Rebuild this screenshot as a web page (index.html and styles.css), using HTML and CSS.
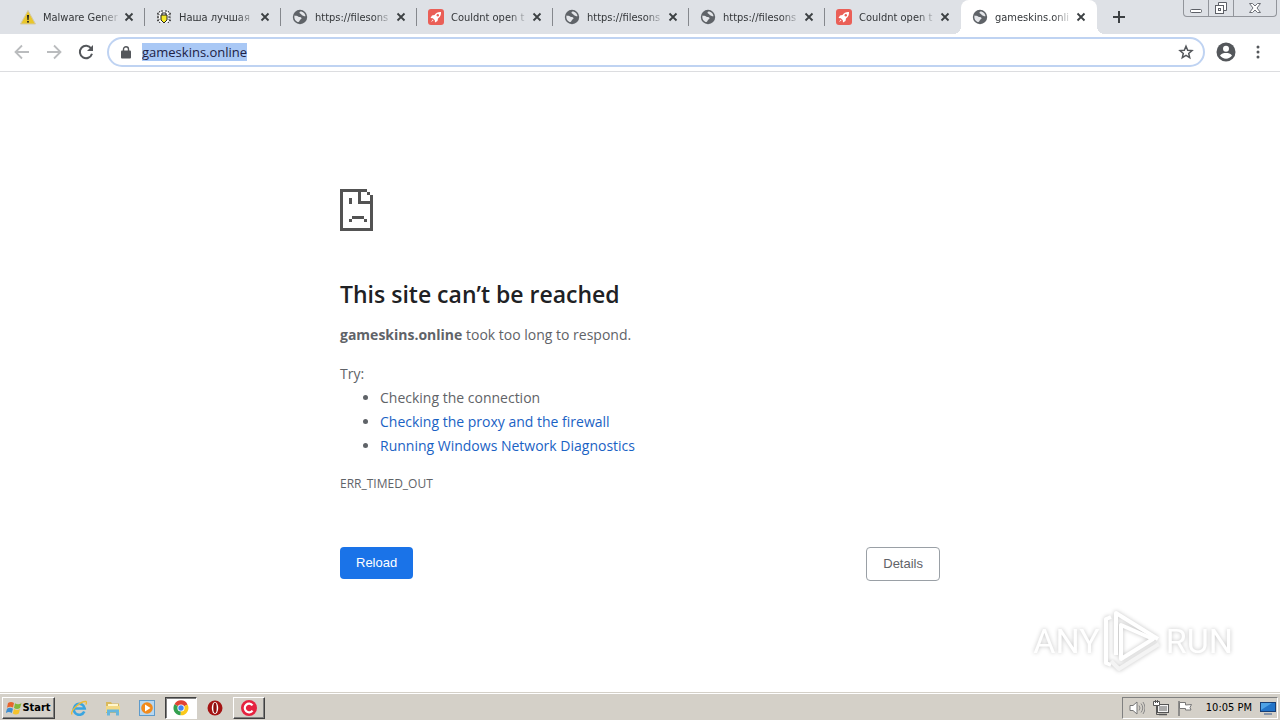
FILE: index.html
```html
<!DOCTYPE html>
<html lang="en">

<head>
    <meta charset="UTF-8">
    <meta name="viewport" content="width=device-width, initial-scale=1.0">
    <title>gameskins.online</title>
    <link rel="stylesheet" href="styles.css">
</head>

<body>
    <!-- shared icons -->
    <svg class="defs" width="0" height="0">
        <symbol id="globe" viewBox="0 0 16 16">
            <circle cx="8" cy="8" r="7.200" fill="#5f6368"/>
            <path d="M2.500 6.500c1.500.3 2.600 0 3.600 1 .9.900 2.700.2 3.400 1.500.4 1.200-1.500 1.300-1.800 2.600-.2 1-1.200 1.800-2.200 1.400C3.500 12 2.300 10 2.300 8z" fill="#e4e6ea"/>
            <path d="M8.500 2.500c-1.500.6-1.200 1.900 0 2.200 1.200.3 1 1.600 2.200 1.800.8.200 1.500 1 2.800.7C13.300 4.700 11 2.500 8.500 2.500z" fill="#e4e6ea"/>
        </symbol>
        <symbol id="rocket" viewBox="0 0 16 16">
            <rect width="16" height="16" rx="3" fill="#ea5f57"/>
            <path d="M13 3c-3-.3-5 .8-6.500 3L4 6.500 2.500 9l2.300.2 2 2L7 13.500l2.500-1.500.5-2.500C12.200 8 13.200 6 13 3z" fill="#fff"/>
            <circle cx="9.800" cy="6.300" r="1.200" fill="#ea5f57"/>
            <path d="M4.800 10.500L2.800 13.200l2.700-1.900z" fill="#fff"/>
        </symbol>
        <symbol id="close" viewBox="0 0 10 10">
            <path d="M1.500 1.500l7 7m0-7l-7 7" stroke="#3c4043" stroke-width="1.800"/>
        </symbol>
    </svg>

    <header class="tabstrip">
        <div class="tab">
            <svg class="favicon" viewBox="0 0 16 16"><path d="M8 1.500L15.500 15H.5z" fill="#e9c62a" stroke="#d3c9a6"/><path d="M7 6h2L8.600 11H7.400z" fill="#222"/><circle cx="8" cy="12.800" r="1" fill="#222"/></svg>
            <span class="title">Malware Gener</span>
            <button class="close" aria-label="Close tab"><svg><use href="#close"/></svg></button>
        </div>
        <div class="tab">
            <svg class="favicon" viewBox="0 0 16 16"><circle cx="8" cy="8" r="6" fill="#fff"/><path d="M4 2L2 5v6l2 3M12 2l2 3v6l-2 3M1 8h3m8 0h3M1 4l3 2m11-2l-3 2M1 12l3-2m11 2l-3-2M6 1v3m4-3v3" fill="none" stroke="#333" stroke-dasharray="2 1"/><path d="M5 6h6v5l-3 3-3-3z" fill="#f5e928" stroke="#222"/><path d="M6 6V4h4v2" fill="none" stroke="#222"/></svg>
            <span class="title">Наша лучшая</span>
            <button class="close" aria-label="Close tab"><svg><use href="#close"/></svg></button>
        </div>
        <div class="tab">
            <svg class="favicon"><use href="#globe"/></svg>
            <span class="title">https://filesons</span>
            <button class="close" aria-label="Close tab"><svg><use href="#close"/></svg></button>
        </div>
        <div class="tab">
            <svg class="favicon"><use href="#rocket"/></svg>
            <span class="title">Couldnt open t</span>
            <button class="close" aria-label="Close tab"><svg><use href="#close"/></svg></button>
        </div>
        <div class="tab">
            <svg class="favicon"><use href="#globe"/></svg>
            <span class="title">https://filesons</span>
            <button class="close" aria-label="Close tab"><svg><use href="#close"/></svg></button>
        </div>
        <div class="tab">
            <svg class="favicon"><use href="#globe"/></svg>
            <span class="title">https://filesons</span>
            <button class="close" aria-label="Close tab"><svg><use href="#close"/></svg></button>
        </div>
        <div class="tab last">
            <svg class="favicon"><use href="#rocket"/></svg>
            <span class="title">Couldnt open t</span>
            <button class="close" aria-label="Close tab"><svg><use href="#close"/></svg></button>
        </div>
        <div class="tab active">
            <svg class="favicon"><use href="#globe"/></svg>
            <span class="title">gameskins.onli</span>
            <button class="close" aria-label="Close tab"><svg><use href="#close"/></svg></button>
        </div>
        <button class="new-tab" aria-label="New tab"><svg viewBox="0 0 12 12"><path d="M6 0v12M0 6h12" stroke="#3c4043" stroke-width="2"/></svg></button>
        <div class="window-buttons">
            <button aria-label="Minimize"><svg viewBox="0 0 14 14"><rect x="1.500" y="8.500" width="11" height="3" rx="1" fill="#fff" stroke="#5d6067"/></svg></button>
            <button aria-label="Restore"><svg viewBox="0 0 14 14"><path d="M4.500 4.500v-3h8v8h-3" fill="#fff" stroke="#5d6067"/><rect x="1.500" y="4.500" width="8" height="8" fill="#fff" stroke="#5d6067"/><rect x="4.500" y="7.500" width="2" height="2" fill="none" stroke="#5d6067"/></svg></button>
            <button class="wide" aria-label="Close"><svg viewBox="0 0 14 14"><path d="M1.500 2.500h3L7 5l2.500-2.500h3L9 7l3.500 4.500h-3L7 9l-2.500 2.500h-3L5 7z" fill="#fff" stroke="#6d7077"/></svg></button>
        </div>
    </header>

    <nav class="toolbar">
        <button aria-label="Back"><svg viewBox="0 0 16 16"><path d="M15 8H2m6-6.500L1.500 8 8 14.500" fill="none" stroke="#babcbe" stroke-width="1.800"/></svg></button>
        <button aria-label="Forward"><svg viewBox="0 0 16 16"><path d="M1 8h13M8 1.500L14.500 8 8 14.500" fill="none" stroke="#babcbe" stroke-width="1.800"/></svg></button>
        <button aria-label="Reload page"><svg viewBox="0 0 16 16"><path d="M13.200 4.500A6.200 6.200 0 1 0 14 9.800" fill="none" stroke="#54575b" stroke-width="2"/><path d="M15 1v6H9z" fill="#54575b"/></svg></button>
        <div class="omnibox">
            <svg class="lock" viewBox="0 0 10 13"><rect y="4.500" width="10" height="8" rx="1" fill="#54575b"/><path d="M2.500 5V3.200a2.500 2.500 0 0 1 5 0V5" fill="none" stroke="#54575b" stroke-width="1.400"/></svg>
            <input type="text" id="address" aria-label="Address" value="gameskins.online" spellcheck="false">
            <button aria-label="Bookmark"><svg viewBox="0 0 16 16"><path d="M8 2.200l1.700 4 4.300.4-3.300 2.800 1 4.200L8 11.400l-3.700 2.200 1-4.200L2 6.600l4.300-.4z" fill="none" stroke="#54575b" stroke-width="1.500"/></svg></button>
        </div>
        <button class="profile" aria-label="Profile"><svg viewBox="0 0 20 20"><circle cx="10" cy="10" r="9.500" fill="#54575b"/><circle cx="10" cy="6.800" r="3" fill="#fff"/><path d="M4 13.500c1.500-2 3.500-2.500 6-2.500s4.500.5 6 2.500c-1.300 2-3.500 3.200-6 3.200S5.300 15.500 4 13.500z" fill="#fff"/></svg></button>
        <button aria-label="Menu"><svg viewBox="0 0 16 16"><g fill="#54575b"><circle cx="8" cy="3" r="1.500"/><circle cx="8" cy="8" r="1.500"/><circle cx="8" cy="13" r="1.500"/></g></svg></button>
    </nav>

    <main>
        <div class="error-page">
            <svg class="sad-page" viewBox="0 0 11 14" shape-rendering="crispEdges">
                <path d="M0 0h9v1H1v12h9V5h1v9H0zM6 1h1v3h3v1H6zM9 1h1v1H9zM10 2h1v3h-1zM3 3h1v2H3zM4 9h4v1H4zM3 10h1v1H3zM8 10h1v1H8z" fill="#535353"/>
            </svg>
            <h1>This site can’t be reached</h1>
            <p><strong>gameskins.online</strong> took too long to respond.</p>
            <p class="try">Try:</p>
            <ul>
                <li>Checking the connection</li>
                <li><a href="#">Checking the proxy and the firewall</a></li>
                <li><a href="#">Running Windows Network Diagnostics</a></li>
            </ul>
            <div class="error-code">ERR_TIMED_OUT</div>
            <div class="buttons">
                <button class="reload">Reload</button>
                <button class="details">Details</button>
            </div>
        </div>
        <div class="watermark">
            <span>ANY</span>
            <svg viewBox="0 0 60 64">
                <g fill="none" stroke="#fff" stroke-width="4" stroke-linejoin="round">
                    <path d="M8 8L3 10v44l5 2"/>
                    <path d="M13 46V4l42 26"/>
                    <path d="M18 16v34l32-20z"/>
                    <path d="M8 52l8 8 40-25" stroke="#f4f4f4"/>
                </g>
            </svg>
            <span>RUN</span>
        </div>
    </main>

    <footer class="taskbar">
        <button class="start">
            <svg viewBox="0 0 16 16"><path d="M2 3c2-1.500 4-1.500 6 0L7 7.500C5 6.500 3 6.500 1 7.800z" fill="#e8642c"/><path d="M9 3.300c2 1.200 4 1.200 6.500 0L14 8c-2 1.300-4 1.200-6 0z" fill="#83b83b"/><path d="M1 8.800c2-1.300 4-1.300 6 0L5.800 13c-2-1.300-4-1.200-6 0z" fill="#3e8ed0"/><path d="M8 9c2 1.200 4 1.200 6 0l-1.200 4.500c-2 1.300-4 1.300-6 0z" fill="#f5c32c"/></svg>
            Start
        </button>
        <button class="app" aria-label="Internet Explorer"><svg viewBox="0 0 16 16"><path d="M13.300 11.500A5.500 5.500 0 1 1 13.700 8.500H4" fill="none" stroke="#3aa5e0" stroke-width="2.600"/><path d="M1 14.500C-1 11 9 1 15 1.500c1 .5.500 2-.3 3" fill="none" stroke="#edba35" stroke-width="1.300"/></svg></button>
        <button class="app" aria-label="Explorer"><svg viewBox="0 0 16 16"><path d="M1 2h5l1 1.500h7V13H1z" fill="#d9b95c"/><path d="M3 4h10v5H3z" fill="#fff6cd"/><path d="M1 6h14v6H1z" fill="#f3d985"/><path d="M2 15.500v-6h12v6h-3v-3H5v3z" fill="#66b6dd"/></svg></button>
        <button class="app" aria-label="Media Player"><svg viewBox="0 0 16 16"><rect x=".5" y=".5" width="15" height="15" fill="#b7d7f0" stroke="#5e9bcb"/><circle cx="8" cy="8" r="5.800" fill="#f18a1c"/><path d="M6 4.500L11.500 8 6 11.500z" fill="#fff"/></svg></button>
        <button class="app pressed" aria-label="Chrome"><svg viewBox="0 0 16 16"><path d="M8 8L1.500 4.200A7.300 7.300 0 0 1 14.500 4.500z" fill="#e04434"/><path d="M8 8l6.500-3.500A7.300 7.300 0 0 1 7.500 15.300z" fill="#fbc91b"/><path d="M8 8l-.5 7.300A7.300 7.300 0 0 1 1.500 4.200z" fill="#34a04f"/><circle cx="8" cy="8" r="3.600" fill="#fff"/><circle cx="8" cy="8" r="2.700" fill="#4285f4"/></svg></button>
        <button class="app" aria-label="Opera"><svg viewBox="0 0 16 16"><circle cx="8" cy="8" r="7.500" fill="#a51414"/><ellipse cx="8" cy="8" rx="3.200" ry="6" fill="#fff"/><ellipse cx="8" cy="8" rx="1.700" ry="5.200" fill="#8d0e0e"/></svg></button>
        <button class="app raised" aria-label="CCleaner"><svg viewBox="0 0 16 16"><circle cx="8" cy="8" r="8" fill="#e5223f"/><path d="M11.500 5.400a4.300 4.300 0 1 0 0 5.200" fill="none" stroke="#fff" stroke-width="2.200"/></svg></button>
        <div class="tray">
            <svg viewBox="0 0 16 16"><path d="M1 5.500h3L8 2v12l-4-3.500H1z" fill="#fff" stroke="#777"/><path d="M10 5.500q2 2.500 0 5M12 3.500q3.500 4.500 0 9M14 2q4 6 0 12" fill="none" stroke="#888"/></svg>
            <svg viewBox="0 0 16 16"><rect x="4.500" y="4.500" width="11" height="8" fill="#f4f4f4" stroke="#555"/><path d="M6 6h8v5H6z" fill="#aaa"/><path d="M6 14.500h8" stroke="#555" stroke-width="1.500"/><path d="M.5 1.500h6v4h-6z" fill="#fff" stroke="#555"/><path d="M2.500 0v3m2-3v3M3.500 6v8.500H6" fill="none" stroke="#555"/></svg>
            <svg viewBox="0 0 16 16"><path d="M2 1v15" stroke="#777" stroke-width="1.500"/><path d="M2.500 2.500h6V5l6-.5-1.500 3 1 2.500H8.500V8.500h-6z" fill="#fff" stroke="#777"/></svg>
            <time>10:05 PM</time>
            <svg viewBox="0 0 16 16"><rect x=".5" y="2.500" width="15" height="9" fill="#2374c8" stroke="#173e75"/><path d="M1 10L12 3H1z" fill="#4da1e5"/><path d="M4 14h8" stroke="#8494aa" stroke-width="2"/></svg>
        </div>
    </footer>

    <script>
        // the address is selected when the page opens
        document.querySelector("#address").select();
    </script>
</body>

</html>
```
FILE: styles.css
```css
* {
    box-sizing: border-box;
}

body {
    margin: 0;
    min-height: 100vh;
    display: flex;
    flex-direction: column;
    background-color: white;
    font-family: "Open Sans", sans-serif;
    color: #5f6368;
}

button {
    display: flex;
    align-items: center;
    justify-content: center;
    padding: 0;
    border: none;
    background: transparent;
    font-family: inherit;
}

svg {
    display: block;
    flex: none;
}

.defs {
    position: absolute;
}

/* tabs */
.tabstrip {
    display: flex;
    height: 34px;
    padding-left: 9px;
    background-color: #dee1e6;
}

.tab {
    flex: 0 1 136px;
    min-width: 0;
    display: flex;
    align-items: center;
    padding: 0 9px 0 11px;
    background: linear-gradient(#85888d, #85888d) right center / 1px 18px no-repeat;
}

.tab.last {
    background: none;
}

.tab.active {
    position: relative;
    background: white;
    border-radius: 8px 8px 0 0;
}

/* flared feet of the active tab */
.tab.active::before,
.tab.active::after {
    content: "";
    position: absolute;
    bottom: 0;
    width: 8px;
    height: 8px;
}

.tab.active::before {
    right: 100%;
    background: radial-gradient(circle at 0 0, transparent 8px, white 8px);
}

.tab.active::after {
    left: 100%;
    background: radial-gradient(circle at 100% 0, transparent 8px, white 8px);
}

.favicon {
    width: 16px;
    height: 16px;
}

.title {
    flex: 1;
    min-width: 0;
    margin: 0 0 0 7px;
    overflow: hidden;
    white-space: nowrap;
    font-family: "DejaVu Sans Condensed", "DejaVu Sans", sans-serif;
    font-size: 11px;
    color: #333639;
    mask-image: linear-gradient(to right, black 58px, transparent 78px);
}

.close {
    width: 14px;
    height: 16px;
}

.close svg {
    width: 10px;
    height: 10px;
}

.new-tab {
    width: 44px;
}

.new-tab svg {
    width: 12px;
    height: 12px;
}

.window-buttons {
    display: flex;
    height: 17px;
    margin-left: auto;
    margin-right: 3px;
    border: 1px solid #92959b;
    border-top: none;
    border-radius: 0 0 4px 4px;
}

.window-buttons button {
    width: 25px;
    border-right: 1px solid #92959b;
}

.window-buttons .wide {
    width: 42px;
    border-right: none;
}

.window-buttons svg {
    width: 14px;
    height: 14px;
}

/* toolbar */
.toolbar {
    display: flex;
    align-items: center;
    height: 38px;
    padding: 0 6px 1px;
    border-bottom: 1px solid #dcdde0;
}

.toolbar button {
    width: 32px;
    height: 32px;
}

.toolbar svg {
    width: 16px;
    height: 16px;
}

.omnibox {
    flex: 1;
    display: flex;
    align-items: center;
    height: 30px;
    margin: 0 5px;
    padding: 0 1px 0 12px;
    border: 2px solid #bfd3f2;
    border-radius: 15px;
}

.omnibox .lock {
    width: 10px;
    height: 13px;
}

.omnibox input {
    flex: 1;
    min-width: 0;
    padding: 0;
    margin-left: 11px;
    border: none;
    outline: none;
    font-family: "Open Sans", sans-serif;
    font-size: 13px;
    line-height: 18px;
    height: 18px;
    color: #202124;
}

.omnibox input::selection {
    background-color: #a9c8f5;
    color: #202145;
}

.toolbar .profile svg {
    width: 20px;
    height: 20px;
}

/* error page */
main {
    flex: 1;
    position: relative;
}

.error-page {
    max-width: 600px;
    margin: 0 auto;
    padding-top: 117px;
    font-size: 14px;
    line-height: 24px;
}

.sad-page {
    width: 33px;
    height: 42px;
}

h1 {
    margin: 48px 0 14px;
    font-size: 23px;
    font-weight: 600;
    line-height: 30px;
    color: #202124;
}

p {
    margin: 0;
}

.try {
    margin-top: 15px;
}

ul {
    margin: 0;
    padding-left: 40px;
}

a {
    color: #1a62c4;
    text-decoration: none;
}

.error-code {
    margin-top: 14px;
    font-size: 12px;
}

.buttons {
    display: flex;
    justify-content: space-between;
    align-items: flex-start;
    margin-top: 51px;
}

.buttons button {
    padding: 0 16px;
    border-radius: 4px;
    font-family: "Liberation Sans", sans-serif;
    font-size: 13px;
    line-height: 32px;
}

.reload {
    background-color: #1a73e8;
    color: white;
}

.details {
    border: 1px solid #9aa0a6;
    color: #5f6368;
}

.watermark {
    position: absolute;
    right: 47px;
    bottom: 19px;
    display: flex;
    align-items: center;
    gap: 3px;
    color: white;
    font-family: Roboto, sans-serif;
    font-size: 34px;
    line-height: 64px;
    filter: drop-shadow(0 0 2px #c4c4c4);
}

.watermark svg {
    width: 60px;
    height: 64px;
}

/* taskbar */
.taskbar {
    display: flex;
    align-items: center;
    height: 28px;
    padding: 2px 2px 0;
    background-color: #d4d0c8;
    border-top: 1px solid #d4d0c8;
    box-shadow: inset 0 1px white;
}

.start {
    height: 22px;
    width: 53px;
    margin-right: 8px;
    font-family: "DejaVu Sans Condensed", sans-serif;
    font-size: 11px;
    font-weight: bold;
    color: black;
}

.taskbar svg {
    width: 16px;
    height: 16px;
}

.app {
    width: 32px;
    height: 22px;
    margin-right: 2px;
}

.start,
.raised {
    border: 1px solid;
    border-color: white #404040 #404040 white;
    box-shadow: inset -1px -1px #808080;
}

.pressed {
    background-color: white;
    border: 1px solid;
    border-color: #404040 white white #404040;
    box-shadow: inset 1px 1px #808080;
}

.tray {
    display: flex;
    align-items: center;
    gap: 8px;
    height: 22px;
    margin-left: auto;
    padding: 0 1px 0 6px;
    border: 1px solid;
    border-color: #808080 white white #808080;
}

.tray time {
    margin: 0 0 0 5px;
    font-family: "DejaVu Sans Condensed", sans-serif;
    font-size: 11px;
    color: black;
}
```
